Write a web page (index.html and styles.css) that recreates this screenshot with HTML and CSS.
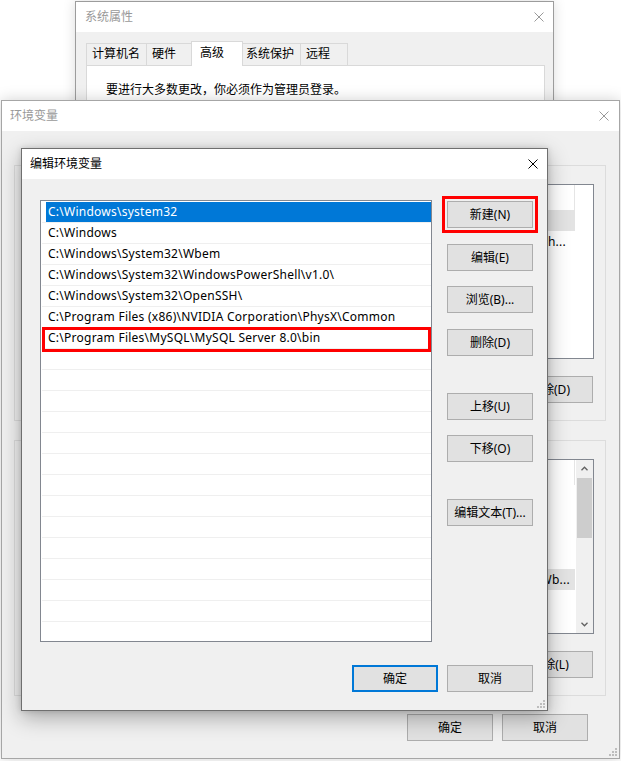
FILE: index.html
```html
<!DOCTYPE html>
<html lang="zh-CN">
<head>
<meta charset="utf-8">
<title>编辑环境变量</title>
<link rel="stylesheet" href="styles.css">
</head>
<body>
<div class="desktop">

  <section class="win win-sys inactive">
    <header class="titlebar">
      <span class="title">系统属性</span>
      <svg class="close" viewBox="0 0 10 10" aria-label="关闭"><path d="M0.5 0.5L9.5 9.5M9.5 0.5L0.5 9.5"/></svg>
    </header>
    <div class="sys-body">
      <nav class="tabs">
        <span class="tab">计算机名</span>
        <span class="tab">硬件</span>
        <span class="tab tab-sel">高级</span>
        <span class="tab">系统保护</span>
        <span class="tab">远程</span>
      </nav>
      <div class="tab-panel">
        <p class="notice">要进行大多数更改，你必须作为管理员登录。</p>
      </div>
    </div>
  </section>

  <section class="win win-env inactive">
    <header class="titlebar">
      <span class="title">环境变量</span>
      <svg class="close" viewBox="0 0 10 10" aria-label="关闭"><path d="M0.5 0.5L9.5 9.5M9.5 0.5L0.5 9.5"/></svg>
    </header>
    <div class="env-body">
      <div class="group">
        <div class="lv">
          <div class="lv-main">
            <div class="lv-head"><span class="c-name"></span><span class="c-val"></span></div>
            <div class="lv-row sel"><span class="c-name"></span><span class="c-val"></span></div>
            <div class="lv-row"><span class="c-name"></span><span class="c-val tail tail-a">th...</span></div>
            <div class="lv-row"><span class="c-name"></span><span class="c-val"></span></div>
            <div class="lv-row"><span class="c-name"></span><span class="c-val"></span></div>
          </div>
        </div>
        <div class="group-btns">
          <button class="btn">删除(D)</button>
        </div>
      </div>

      <div class="group">
        <div class="lv">
          <div class="lv-main">
            <div class="lv-head"><span class="c-name"></span><span class="c-val"></span></div>
            <div class="lv-row"><span class="c-name"></span><span class="c-val"></span></div>
            <div class="lv-row"><span class="c-name"></span><span class="c-val"></span></div>
            <div class="lv-row"><span class="c-name"></span><span class="c-val"></span></div>
            <div class="lv-row"><span class="c-name"></span><span class="c-val"></span></div>
            <div class="lv-row sel"><span class="c-name"></span><span class="c-val tail tail-b">Wb...</span></div>
            <div class="lv-row"><span class="c-name"></span><span class="c-val"></span></div>
            <div class="lv-row"><span class="c-name"></span><span class="c-val"></span></div>
          </div>
          <div class="sb">
            <div class="sb-arrow"><svg width="7" height="5" viewBox="0 0 7 5"><path d="M0.5 4.2L3.5 1.2L6.5 4.2"/></svg></div>
            <div class="sb-track"><div class="sb-thumb"></div></div>
            <div class="sb-arrow"><svg width="7" height="5" viewBox="0 0 7 5"><path d="M0.5 0.8L3.5 3.8L6.5 0.8"/></svg></div>
          </div>
        </div>
        <div class="group-btns">
          <button class="btn">删除(L)</button>
        </div>
      </div>

      <div class="dlg-footer env-footer">
        <button class="btn">确定</button>
        <button class="btn">取消</button>
      </div>
    </div>
    <svg class="grip" width="8" height="8" viewBox="0 0 8 8"><g><rect x="6" y="0" width="2" height="2"/><rect x="3" y="3" width="2" height="2"/><rect x="6" y="3" width="2" height="2"/><rect x="0" y="6" width="2" height="2"/><rect x="3" y="6" width="2" height="2"/><rect x="6" y="6" width="2" height="2"/></g></svg>
  </section>

  <section class="win win-edit">
    <header class="titlebar">
      <span class="title">编辑环境变量</span>
      <svg class="close" viewBox="0 0 10 10" aria-label="关闭"><path d="M0.5 0.5L9.5 9.5M9.5 0.5L0.5 9.5"/></svg>
    </header>
    <div class="edit-body">
      <div class="pathlist">
        <div class="path-row sel"><span>C:\Windows\system32</span></div>
        <div class="path-row"><span>C:\Windows</span></div>
        <div class="path-row"><span>C:\Windows\System32\Wbem</span></div>
        <div class="path-row"><span>C:\Windows\System32\WindowsPowerShell\v1.0\</span></div>
        <div class="path-row"><span>C:\Windows\System32\OpenSSH\</span></div>
        <div class="path-row"><span>C:\Program Files (x86)\NVIDIA Corporation\PhysX\Common</span></div>
        <div class="path-row"><span>C:\Program Files\MySQL\MySQL Server 8.0\bin</span></div>
        <div class="path-row"><span></span></div>
        <div class="path-row"><span></span></div>
        <div class="path-row"><span></span></div>
        <div class="path-row"><span></span></div>
        <div class="path-row"><span></span></div>
        <div class="path-row"><span></span></div>
        <div class="path-row"><span></span></div>
        <div class="path-row"><span></span></div>
        <div class="path-row"><span></span></div>
        <div class="path-row"><span></span></div>
        <div class="path-row"><span></span></div>
        <div class="path-row"><span></span></div>
        <div class="path-row"><span></span></div>
        <div class="path-row"><span></span></div>
        <div class="annot-box"></div>
      </div>
      <div class="side-btns">
        <button class="btn btn-marked">新建(N)</button>
        <button class="btn">编辑(E)</button>
        <button class="btn">浏览(B)...</button>
        <button class="btn">删除(D)</button>
        <button class="btn gap-lg">上移(U)</button>
        <button class="btn">下移(O)</button>
        <button class="btn gap-lg">编辑文本(T)...</button>
      </div>
      <div class="dlg-footer edit-footer">
        <button class="btn btn-default">确定</button>
        <button class="btn">取消</button>
      </div>
    </div>
    <svg class="grip" width="8" height="8" viewBox="0 0 8 8"><g><rect x="6" y="0" width="2" height="2"/><rect x="3" y="3" width="2" height="2"/><rect x="6" y="3" width="2" height="2"/><rect x="0" y="6" width="2" height="2"/><rect x="3" y="6" width="2" height="2"/><rect x="6" y="6" width="2" height="2"/></g></svg>
  </section>

</div>
</body>
</html>
```

FILE: styles.css
```css
* { box-sizing: border-box; margin: 0; padding: 0; }

html, body { width: 621px; height: 761px; }

body {
  overflow: hidden;
  background: #ffffff;
  font-family: "Noto Sans", "Noto Sans CJK SC", sans-serif;
  font-size: 12px;
  line-height: 16px;
  color: #000;
}

.desktop {
  position: relative;
  width: 621px;
  height: 761px;
  overflow: hidden;
}

/* ---------- windows ---------- */
.win {
  position: absolute;
  display: flex;
  flex-direction: column;
  background: #f0f0f0;
  border: 1px solid #a6a6a6;
}

.win-sys {
  left: 75px;
  top: 1px;
  width: 479px;
  height: 600px;
  border-color: #9c9c9c;
  box-shadow: 0 0 12px rgba(0, 0, 0, 0.14);
}

.win-env {
  left: 1px;
  top: 100px;
  width: 619px;
  height: 659px;
  box-shadow: 0 0 14px rgba(0, 0, 0, 0.18);
}

.win-edit {
  left: 21px;
  top: 148px;
  width: 527px;
  height: 563px;
  border-color: #6f6f6f;
  box-shadow: 0 7px 20px rgba(0, 0, 0, 0.3), 0 0 6px rgba(0, 0, 0, 0.14);
}

.titlebar {
  flex: none;
  height: 30px;
  background: #fff;
  display: flex;
  align-items: center;
  justify-content: space-between;
  padding: 0 9px 0 8px;
}

.win-sys .titlebar { padding: 0 9px 0 9px; }
.win-env .titlebar { padding-right: 10px; }

.title { line-height: 16px; }
.inactive .title { color: #999; }

.close {
  display: block;
  width: 10px;
  height: 10px;
}
.close path { fill: none; stroke: #000; stroke-width: 1; }
.inactive .close path { stroke: #999; }

.grip {
  position: absolute;
  right: 2px;
  bottom: 2px;
}
.grip g { fill: #bdbdbd; }

/* ---------- buttons ---------- */
.btn {
  display: block;
  width: 86px;
  height: 27px;
  border: 1px solid #adadad;
  background: #e1e1e1;
  font: inherit;
  color: #000;
  line-height: 25px;
  text-align: center;
  white-space: nowrap;
}

.btn-default {
  border: 2px solid #0078d7;
  line-height: 23px;
}

.btn-marked {
  outline: 3px solid #ff0000;
  outline-offset: 2px;
}

.dlg-footer {
  display: flex;
  justify-content: flex-end;
  gap: 9px;
}

/* ---------- 系统属性 ---------- */
.sys-body {
  flex: 1;
  display: flex;
  flex-direction: column;
  padding: 9px 8px 0 10px;
}

.tabs {
  display: flex;
  align-items: flex-end;
  height: 24px;
}

.tab {
  height: 22px;
  min-width: 48px;
  padding: 0 6px 0 5px;
  margin-right: -1px;
  border: 1px solid #d9d9d9;
  border-bottom: 0;
  background: #f0f0f0;
  line-height: 20px;
  white-space: nowrap;
}

.tab-sel {
  position: relative;
  z-index: 1;
  height: 25px;
  min-width: 52px;
  margin: 0 -3px -1px -2px;
  padding-left: 8px;
  background: #fff;
  line-height: 21px;
}

.tab-panel {
  flex: 1;
  background: #fff;
  border: 1px solid #d9d9d9;
  padding: 16px 0 0 19px;
}

/* ---------- 环境变量 ---------- */
.env-body {
  flex: 1;
  display: flex;
  flex-direction: column;
  padding: 34px 13px 16px 12px;
}

.group {
  position: relative;
  flex: none;
  height: 256px;
  border: 1px solid #dcdcdc;
  padding: 18px 11px 0 11px;
  display: flex;
  flex-direction: column;
}

.group + .group { margin-top: 19px; }

.lv {
  flex: none;
  height: 175px;
  border: 1px solid #828790;
  background: #fff;
  display: flex;
  overflow: hidden;
}

.lv-main {
  flex: 1;
  min-width: 0;
  letter-spacing: 0.25px;
}

.lv-head, .lv-row {
  display: flex;
  width: 548px;
}

.lv-head { height: 25px; line-height: 24px; }
.lv-row { height: 21px; line-height: 21px; }
.lv-row.sel { background: #e3e3e3; }

.c-name, .c-val {
  flex: none;
  padding: 0 6px;
  overflow: hidden;
  white-space: nowrap;
}
.c-name { width: 167px; }
.c-val { width: 381px; }

/* only the truncated end of these long values is left uncovered */
.tail { text-align: right; }
.tail-a { padding-right: 9px; }
.tail-b { padding-right: 5px; }

.lv-head .c-name, .lv-head .c-val { border-right: 1px solid #e5e5e5; }

.sb {
  flex: none;
  width: 17px;
  background: #f0f0f0;
  display: flex;
  flex-direction: column;
}

.sb-arrow {
  flex: none;
  height: 17px;
  display: flex;
  align-items: center;
  justify-content: center;
}
.sb-arrow path { fill: none; stroke: #606060; stroke-width: 1.3; }

.sb-track {
  flex: 1;
  padding: 1px 1px 0 1px;
}

.sb-thumb {
  height: 60px;
  background: #cdcdcd;
}

.group-btns {
  display: flex;
  justify-content: flex-end;
  gap: 9px;
  margin-top: 17px;
  padding-right: 1px;
}

.env-footer {
  margin-top: 18px;
  padding-right: 18px;
}

/* ---------- 编辑环境变量 ---------- */
.edit-body {
  flex: 1;
  display: grid;
  grid-template-columns: 392px 86px;
  grid-template-rows: 442px 27px;
  column-gap: 15px;
  row-gap: 23px;
  padding: 21px 14px 18px 18px;
}

.pathlist {
  position: relative;
  border: 1px solid #828790;
  background: #fff;
  padding-top: 1px;
  overflow: hidden;
  letter-spacing: 0.25px;
}

.path-row {
  display: flex;
  height: 21px;
  margin-left: 1px;
  padding-left: 4px;
  border-bottom: 1px solid #efefef;
}

.path-row span {
  flex: 1;
  padding-left: 2px;
  line-height: 20px;
  white-space: nowrap;
}

.path-row.sel span {
  background: #0078d7;
  color: #fff;
}

.annot-box {
  position: absolute;
  left: 1px;
  top: 126px;
  width: 389px;
  height: 25px;
  border: 3px solid #ff0000;
}

.side-btns {
  display: flex;
  flex-direction: column;
  gap: 15.5px;
  padding-top: 1px;
}

.side-btns .gap-lg { margin-top: 21.5px; }

.edit-footer {
  grid-column: 1 / -1;
}
```
